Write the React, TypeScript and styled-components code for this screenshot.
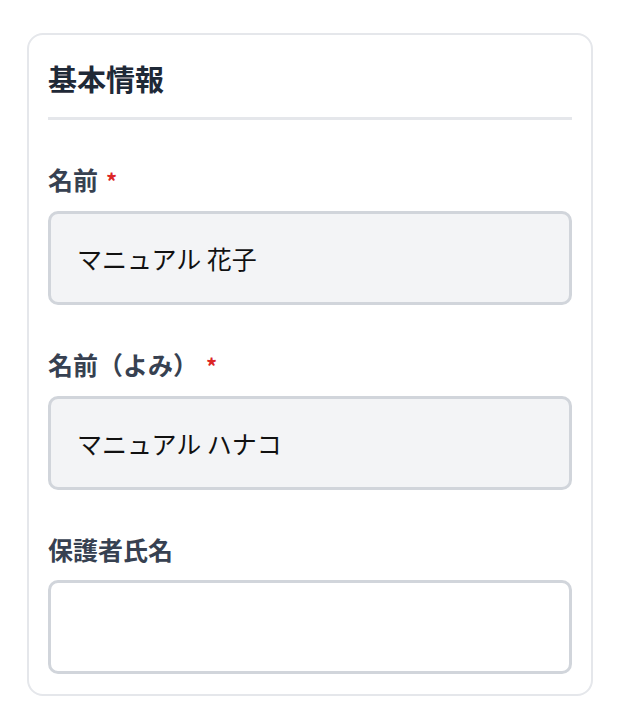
import React from "react";
import styled, { createGlobalStyle } from "styled-components";

const GlobalStyle = createGlobalStyle`
  html, body {
    margin: 0;
    padding: 0;
    background: #ffffff;
  }
  body {
    font-family: "Noto Sans CJK JP", "Noto Sans", sans-serif;
  }
`;

const Page = styled.div`
  padding: 33px 27px 0 27px;
`;

const Card = styled.section`
  width: 566px;
  box-sizing: border-box;
  border: 2px solid #e5e7eb;
  border-radius: 16px;
  padding: 21px 19px 20px 19px;
  background: #ffffff;
`;

const Heading = styled.h2`
  margin: 0;
  font-size: 29px;
  line-height: 44px;
  font-weight: 700;
  color: #1f2937;
  padding-bottom: 17px;
  border-bottom: 3px solid #e5e7eb;
`;

const Field = styled.div`
  display: flex;
  flex-direction: column;
  margin-top: 41px;
`;

const Label = styled.label`
  display: block;
  font-size: 25px;
  line-height: 36px;
  font-weight: 700;
  color: #374151;
  margin-bottom: 13px;
`;

const Required = styled.span`
  color: #dc2626;
  margin-left: 8px;
  font-size: 22px;
`;

const Input = styled.input<{ $filled: boolean }>`
  box-sizing: border-box;
  width: 100%;
  height: 94px;
  border: 3px solid #d1d5db;
  border-radius: 10px;
  background: ${(p) => (p.$filled ? "#f3f4f6" : "#ffffff")};
  padding: 0 26px;
  font-family: "Noto Sans CJK JP", "Noto Sans", sans-serif;
  font-size: 25px;
  color: #111111;
  outline: none;
`;

const fields = [
  { label: "名前", required: true, value: "マニュアル 花子" },
  { label: "名前（よみ）", required: true, value: "マニュアル ハナコ" },
  { label: "保護者氏名", required: false, value: "" },
];

export default function App() {
  return (
    <>
      <GlobalStyle />
      <Page>
        <Card>
          <Heading>基本情報</Heading>
          {fields.map((f) => (
            <Field key={f.label}>
              <Label>
                {f.label}
                {f.required && <Required>*</Required>}
              </Label>
              <Input
                $filled={f.value !== ""}
                defaultValue={f.value}
                readOnly={f.value !== ""}
              />
            </Field>
          ))}
        </Card>
      </Page>
    </>
  );
}
